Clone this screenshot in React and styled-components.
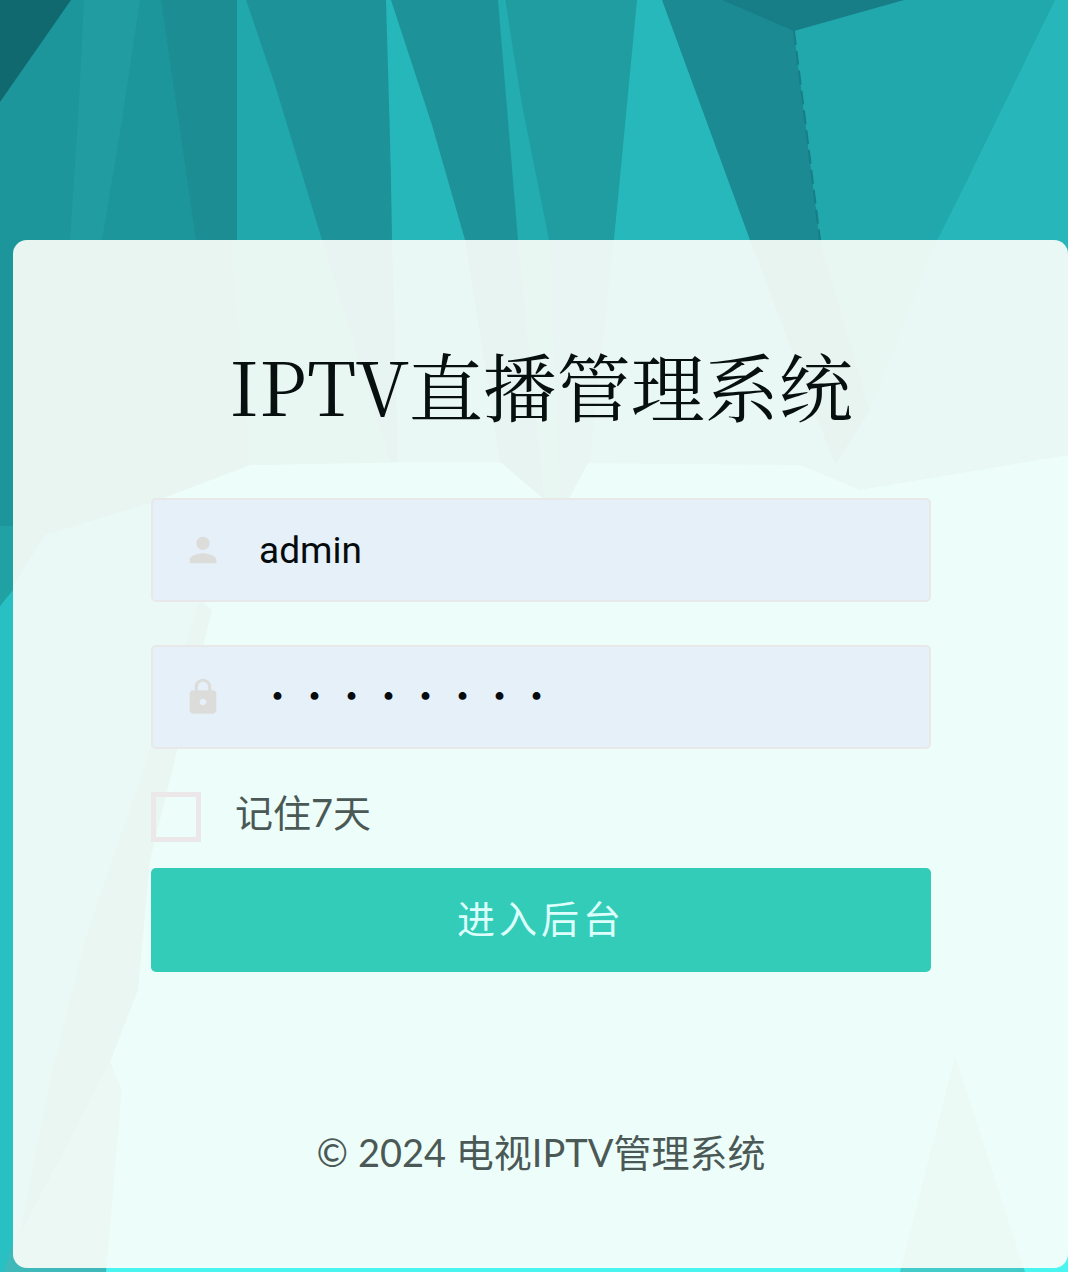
import { useState } from "react";
import styled, { createGlobalStyle } from "styled-components";
import { MdPerson, MdLock } from "react-icons/md";

// low-poly backdrop, drawn from back to front
const facets = [
  { fill: "#4bf5ef", points: "0,0 1068,0 1068,1272 0,1272" },
  { fill: "#28c0c2", points: "0,540 150,500 205,600 150,760 85,940 20,1240 5,1272 0,1272" },
  { fill: "#3fb8ba", points: "4,1272 18,1225 110,1060 122,1090 106,1272" },
  { fill: "#1fa0a3", points: "200,600 212,610 150,860 138,990 110,1062 20,1235 50,1080 85,940 150,750" },
  { fill: "#42cbc9", points: "955,1055 1025,1272 900,1272" },
  { fill: "#25b6b9", points: "0,0 1068,0 1068,455 860,490 800,465 430,462 250,465 150,503 45,535 0,606" },
  { fill: "#1d969b", points: "0,0 237,0 240,240 250,465 150,503 45,535 0,606" },
  { fill: "#20a2a5", points: "0,526 13,526 13,590 0,606" },
  { fill: "#219da2", points: "84,0 140,0 122,120 102,240 70,240 78,120" },
  { fill: "#21a8ad", points: "230,0 260,0 330,240 390,462 250,465 231,240" },
  { fill: "#1c8d93", points: "161,0 237,0 237,240 196,240 180,130" },
  { fill: "#1d9399", points: "246,0 388,0 392,240 400,462 390,462 322,240 275,85" },
  { fill: "#26b7ba", points: "386,0 391,0 470,240 500,462 398,462 393,240" },
  { fill: "#1d9399", points: "391,0 500,0 520,240 545,500 500,462 465,240 432,125" },
  { fill: "#23adb1", points: "498,0 504,0 552,240 560,505 545,500 518,240" },
  { fill: "#209da1", points: "505,0 640,0 614,240 590,460 560,515 549,240 522,105" },
  { fill: "#27b8bb", points: "637,0 664,0 755,240 835,465 590,462 614,240" },
  { fill: "#1b8a92", points: "662,0 850,0 794,31 820,240 870,410 835,465 750,240" },
  { fill: "#21a8ac", points: "794,31 900,0 1060,0 937,240 870,410 820,240" },
  { fill: "#177d87", points: "722,0 904,0 794,31" },
  { fill: "#27b7ba", points: "1055,0 1068,0 1068,455 860,485 870,410 938,240" },
  { fill: "#116970", points: "0,0 71,0 0,102" },
];

const App = () => {
  const [username, setUsername] = useState("admin");
  const [password, setPassword] = useState("admin888");
  const [remember, setRemember] = useState(false);

  return (
    <>
      <GlobalStyle />
      <Page>
        <Backdrop viewBox="0 0 1068 1272" preserveAspectRatio="none" aria-hidden="true">
          {facets.map((facet) => (
            <polygon key={facet.points} fill={facet.fill} points={facet.points} />
          ))}
          <path
            d="M794 31 L820 240"
            stroke="#177d87"
            strokeWidth="2"
            strokeDasharray="14 6"
          />
        </Backdrop>
        <Panel>
          <Title>IPTV直播管理系统</Title>
          <Form onSubmit={(event) => event.preventDefault()}>
            <Field>
              <MdPerson />
              <Input
                type="text"
                aria-label="用户名"
                value={username}
                onChange={(event) => setUsername(event.target.value)}
              />
            </Field>
            <Field>
              <MdLock />
              <PasswordInput
                type="password"
                aria-label="密码"
                value={password}
                onChange={(event) => setPassword(event.target.value)}
              />
            </Field>
            <Remember>
              <Checkbox
                type="checkbox"
                checked={remember}
                onChange={() => setRemember(!remember)}
              />
              记住7天
            </Remember>
            <SubmitButton type="submit">进入后台</SubmitButton>
          </Form>
          <Footer>© 2024 电视IPTV管理系统</Footer>
        </Panel>
      </Page>
    </>
  );
};

const GlobalStyle = createGlobalStyle`
  * {
    box-sizing: border-box;
  }

  body {
    margin: 0;
    font-family: Lato, "Noto Sans CJK SC", sans-serif;
    font-size: 38px;
    color: #4b5956;
  }
`;

const Page = styled.main`
  position: relative;
  min-height: 100vh;
  padding: 240px 0 4px 13px;
`;

const Backdrop = styled.svg`
  position: absolute;
  inset: 0;
  width: 100%;
  height: 100%;
`;

const Panel = styled.section`
  position: relative;
  padding: 100px 137px 88px 138px;
  border-radius: 14px;
  background-color: rgba(255, 255, 251, 0.9);
`;

const Title = styled.h1`
  margin: 0 0 70px;
  font-family: "Noto Serif CJK SC", "Liberation Serif", serif;
  font-size: 74px;
  font-weight: 400;
  line-height: 88px;
  text-align: center;
  white-space: nowrap;
  color: #07100f;
`;

const Form = styled.form`
  display: flex;
  flex-direction: column;
`;

const Field = styled.div`
  display: flex;
  align-items: center;
  gap: 36px;
  height: 104px;
  margin-bottom: 43px;
  padding: 0 30px;
  border: 2px solid #e8e8e9;
  border-radius: 5px;
  background-color: #e6f0f9;

  svg {
    flex: none;
    width: 40px;
    height: 40px;
    color: #dcdddb;
  }
`;

const Input = styled.input`
  flex: 1;
  min-width: 0;
  height: 100%;
  padding: 0;
  border: none;
  outline: none;
  background: transparent;
  color: #050b0d;
  font-family: Roboto, "Noto Sans CJK SC", sans-serif;
  font-size: 37px;
`;

const PasswordInput = styled(Input)`
  padding-bottom: 6px;
  font-family: "Noto Sans CJK SC", sans-serif;
`;

const Remember = styled.label`
  display: flex;
  align-items: flex-start;
  gap: 34px;
  height: 48px;
  margin-bottom: 28px;
  line-height: 40px;
  cursor: pointer;
`;

const Checkbox = styled.input`
  appearance: none;
  width: 50px;
  height: 50px;
  margin: 0;
  border: 5px solid #ece7e8;

  &:checked {
    background-color: #32ccb8;
  }
`;

const SubmitButton = styled.button`
  height: 104px;
  padding: 0 0 8px;
  border: none;
  border-radius: 5px;
  background-color: #32ccb8;
  color: #dcfffb;
  font-family: inherit;
  font-size: 38px;
  letter-spacing: 4px;
  cursor: pointer;

  &:hover {
    background-color: #2bbfac;
  }
`;

const Footer = styled.footer`
  margin-top: 152px;
  line-height: 56px;
  text-align: center;
`;

export default App;
